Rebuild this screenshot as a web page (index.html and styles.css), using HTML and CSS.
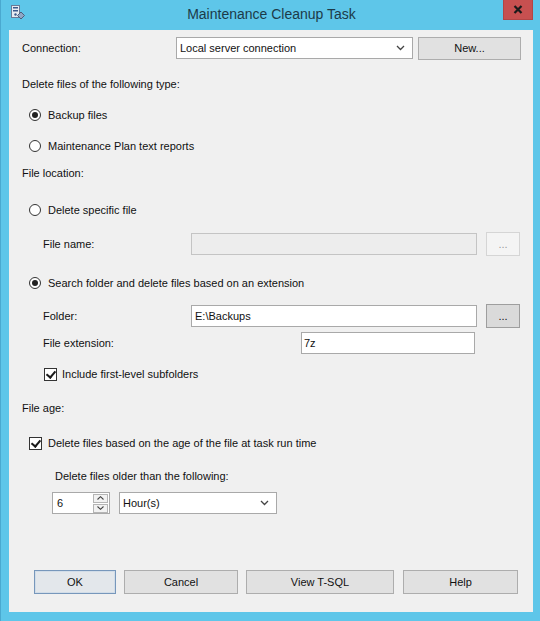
FILE: index.html
```html
<!DOCTYPE html>
<html lang="en">
  <head>
    <meta charset="UTF-8" />
    <meta name="viewport" content="width=device-width, initial-scale=1.0" />
    <title>Maintenance Cleanup Task</title>
    <link rel="stylesheet" href="styles.css">
  </head>
  <body>
    <div class="window">
      <div class="titlebar">
        <svg class="appIcon" width="15" height="16" viewBox="0 0 15 16">
          <rect x="1.5" y="1.5" width="8" height="12" fill="#e8ecf2" stroke="#6a7a96" />
          <rect x="3" y="3" width="5" height="1.5" fill="#3a5a8c" />
          <rect x="3" y="6" width="5" height="1.5" fill="#3a5a8c" />
          <circle cx="5.5" cy="10.5" r="1.2" fill="#3a5a8c" />
          <path d="M11 8 L14.5 11.5 L11 15 L7.5 11.5 Z" fill="#8fa6c4" stroke="#4d5f7d" />
        </svg>
        <div class="title">Maintenance Cleanup Task</div>
        <div class="closeBox">
          <div class="closeBtn">
            <svg width="10" height="9" viewBox="0 0 10 9">
              <path d="M1.5 1 L8.5 8 M8.5 1 L1.5 8" stroke="#1a1a1a" stroke-width="2.2" />
            </svg>
          </div>
        </div>
      </div>

      <main class="client">
        <div class="row">
          <span class="label connLabel">Connection:</span>
          <div class="combo connCombo">
            <span>Local server connection</span>
            <svg class="chev" width="9" height="6" viewBox="0 0 9 6"><path d="M1 1 L4.5 4.5 L8 1" fill="none" stroke="#444" stroke-width="1.3" /></svg>
          </div>
          <button class="btn newBtn">New...</button>
        </div>

        <div class="line gapType">Delete files of the following type:</div>
        <div class="line option gapBackup"><span class="radio on"></span>Backup files</div>
        <div class="line option gapMaint"><span class="radio"></span>Maintenance Plan text reports</div>

        <div class="line gapLocation">File location:</div>
        <div class="line option gapSpecific"><span class="radio"></span>Delete specific file</div>
        <div class="row sub gapFileName">
          <span class="label subLabel">File name:</span>
          <div class="field wide disabled"></div>
          <button class="btn browse disabledBtn">...</button>
        </div>
        <div class="line option gapSearch"><span class="radio on"></span>Search folder and delete files based on an extension</div>
        <div class="row sub gapFolder">
          <span class="label subLabel">Folder:</span>
          <div class="field wide">E:\Backups</div>
          <button class="btn browse">...</button>
        </div>
        <div class="row sub gapExt">
          <span class="label extLabel">File extension:</span>
          <div class="field ext">7z</div>
        </div>
        <div class="line check subCheck gapInclude"><span class="box on"></span>Include first-level subfolders</div>

        <div class="line gapAge">File age:</div>
        <div class="line check ageCheck gapBased"><span class="box on"></span>Delete files based on the age of the file at task run time</div>
        <div class="line older gapOlder">Delete files older than the following:</div>
        <div class="row spinRow gapSpin">
          <div class="field spin">
            <span class="spinVal">6</span>
            <div class="spinBtns">
              <span class="spinBtn"><svg width="7" height="4" viewBox="0 0 7 4"><path d="M0.5 3.5 L3.5 0.7 L6.5 3.5" fill="none" stroke="#444" stroke-width="1.1" /></svg></span>
              <span class="spinBtn"><svg width="7" height="4" viewBox="0 0 7 4"><path d="M0.5 0.5 L3.5 3.3 L6.5 0.5" fill="none" stroke="#444" stroke-width="1.1" /></svg></span>
            </div>
          </div>
          <div class="combo unitCombo">
            <span>Hour(s)</span>
            <svg class="chev" width="9" height="6" viewBox="0 0 9 6"><path d="M1 1 L4.5 4.5 L8 1" fill="none" stroke="#444" stroke-width="1.3" /></svg>
          </div>
        </div>

        <div class="footer">
          <button class="btn okBtn">OK</button>
          <button class="btn cancelBtn">Cancel</button>
          <button class="btn sqlBtn">View T-SQL</button>
          <button class="btn helpBtn">Help</button>
        </div>
      </main>
    </div>
  </body>
</html>
```

FILE: styles.css
```css
* {
  box-sizing: border-box;
}
body {
  margin: 0;
  background: #5ec6e9;
  font-family: "Liberation Sans", Arial, sans-serif;
  font-size: 11px;
  color: #111;
}
.window {
  width: 540px;
  height: 621px;
  padding: 0 7px 9px 8px;
  background: #5ec6e9;
  border-left: 1px solid #4aa9d0;
  display: flex;
  flex-direction: column;
}
.titlebar {
  height: 30px;
  display: grid;
  grid-template-columns: 1fr auto 1fr;
  align-items: start;
  padding-left: 1px;
}
.appIcon {
  margin-top: 4px;
}
.title {
  font-size: 14px;
  line-height: 29px;
  color: #1c3a48;
}
.closeBox {
  display: flex;
  justify-content: flex-end;
}
.closeBtn {
  width: 30px;
  height: 20px;
  background: #c75050;
  border: 1px solid #b24545;
  border-top: none;
  display: flex;
  align-items: center;
  justify-content: center;
}
.client {
  flex: 1;
  background: #f0f0f0;
  padding: 7px 12px 18px 13px;
  display: flex;
  flex-direction: column;
}
.row {
  height: 22px;
  display: flex;
  align-items: center;
}
.line {
  height: 22px;
  line-height: 22px;
  white-space: nowrap;
}
.label {
  flex: none;
}
.connLabel {
  width: 154px;
}
.combo {
  height: 22px;
  background: #fff;
  border: 1px solid #a9a9a9;
  display: flex;
  align-items: center;
  justify-content: space-between;
  padding: 0 7px 0 3px;
}
.connCombo {
  width: 238px;
}
.unitCombo {
  width: 158px;
  margin-left: 9px;
}
.btn {
  font-family: inherit;
  font-size: 11px;
  color: #111;
  background: #e1e1e1;
  border: 1px solid #adadad;
  height: 23px;
  padding: 0;
  flex: none;
}
.newBtn {
  width: 103px;
  margin-left: 5px;
}
.option,
.check {
  display: flex;
  align-items: center;
}
.option {
  padding-left: 7px;
}
.radio {
  width: 12px;
  height: 12px;
  border: 1px solid #333;
  border-radius: 50%;
  background: #fff;
  margin-right: 7px;
  display: flex;
  align-items: center;
  justify-content: center;
}
.radio.on::after {
  content: "";
  width: 6px;
  height: 6px;
  border-radius: 50%;
  background: #222;
}
.box {
  width: 13px;
  height: 13px;
  border: 1px solid #333;
  background: #fff;
  margin-right: 5px;
  position: relative;
}
.box.on::after {
  content: "";
  position: absolute;
  left: 3px;
  top: 0px;
  width: 4px;
  height: 7px;
  border: solid #1a1a1a;
  border-width: 0 2px 2px 0;
  transform: rotate(40deg);
}
.sub {
  padding-left: 21px;
}
.subLabel {
  width: 148px;
}
.extLabel {
  width: 258px;
}
.field {
  height: 22px;
  background: #fff;
  border: 1px solid #a9a9a9;
  padding: 0 3px;
  line-height: 20px;
}
.wide {
  width: 286px;
}
.ext {
  width: 174px;
  padding-left: 2px;
}
.disabled {
  background: #ededed;
  border-color: #c4c4c4;
}
.browse {
  width: 34px;
  height: 24px;
  margin-left: 9px;
  background: #dadada;
  border-color: #9e9e9e;
}
.disabledBtn {
  background: #f4f4f4;
  border-color: #d5d5d5;
  color: #9a9a9a;
}
.subCheck {
  padding-left: 22px;
}
.ageCheck {
  padding-left: 7px;
}
.ageCheck .box {
  margin-right: 6px;
}
.older {
  padding-left: 33px;
}
.spinRow {
  padding-left: 30px;
}
.spin {
  width: 58px;
  display: flex;
  align-items: center;
  justify-content: space-between;
  padding: 0 1px 0 4px;
}
.spinBtns {
  display: flex;
  flex-direction: column;
  gap: 1px;
}
.spinBtn {
  width: 15px;
  height: 9px;
  background: #f2f2f2;
  border: 1px solid #b5b5b5;
  display: flex;
  align-items: center;
  justify-content: center;
}
.footer {
  margin-top: auto;
  padding-left: 12px;
  display: flex;
}
.footer .btn {
  height: 24px;
}
.okBtn {
  width: 82px;
  background: #e3e7eb;
  border-color: #7797bb;
  box-shadow: inset 0 0 0 1px #d2dde8;
}
.cancelBtn {
  width: 114px;
  margin-left: 8px;
}
.sqlBtn {
  width: 148px;
  margin-left: 8px;
}
.helpBtn {
  width: 115px;
  margin-left: 9px;
}
.gapType { margin-top: 14px; }
.gapBackup { margin-top: 9px; }
.gapMaint { margin-top: 9px; }
.gapLocation { margin-top: 5px; }
.gapSpecific { margin-top: 15px; }
.gapFileName { margin-top: 12px; }
.gapSearch { margin-top: 17px; }
.gapFolder { margin-top: 11px; }
.gapExt { margin-top: 5px; }
.gapInclude { margin-top: 9px; }
.gapAge { margin-top: 12px; }
.gapBased { margin-top: 13px; }
.gapOlder { margin-top: 11px; }
.gapSpin { margin-top: 5px; }
```
